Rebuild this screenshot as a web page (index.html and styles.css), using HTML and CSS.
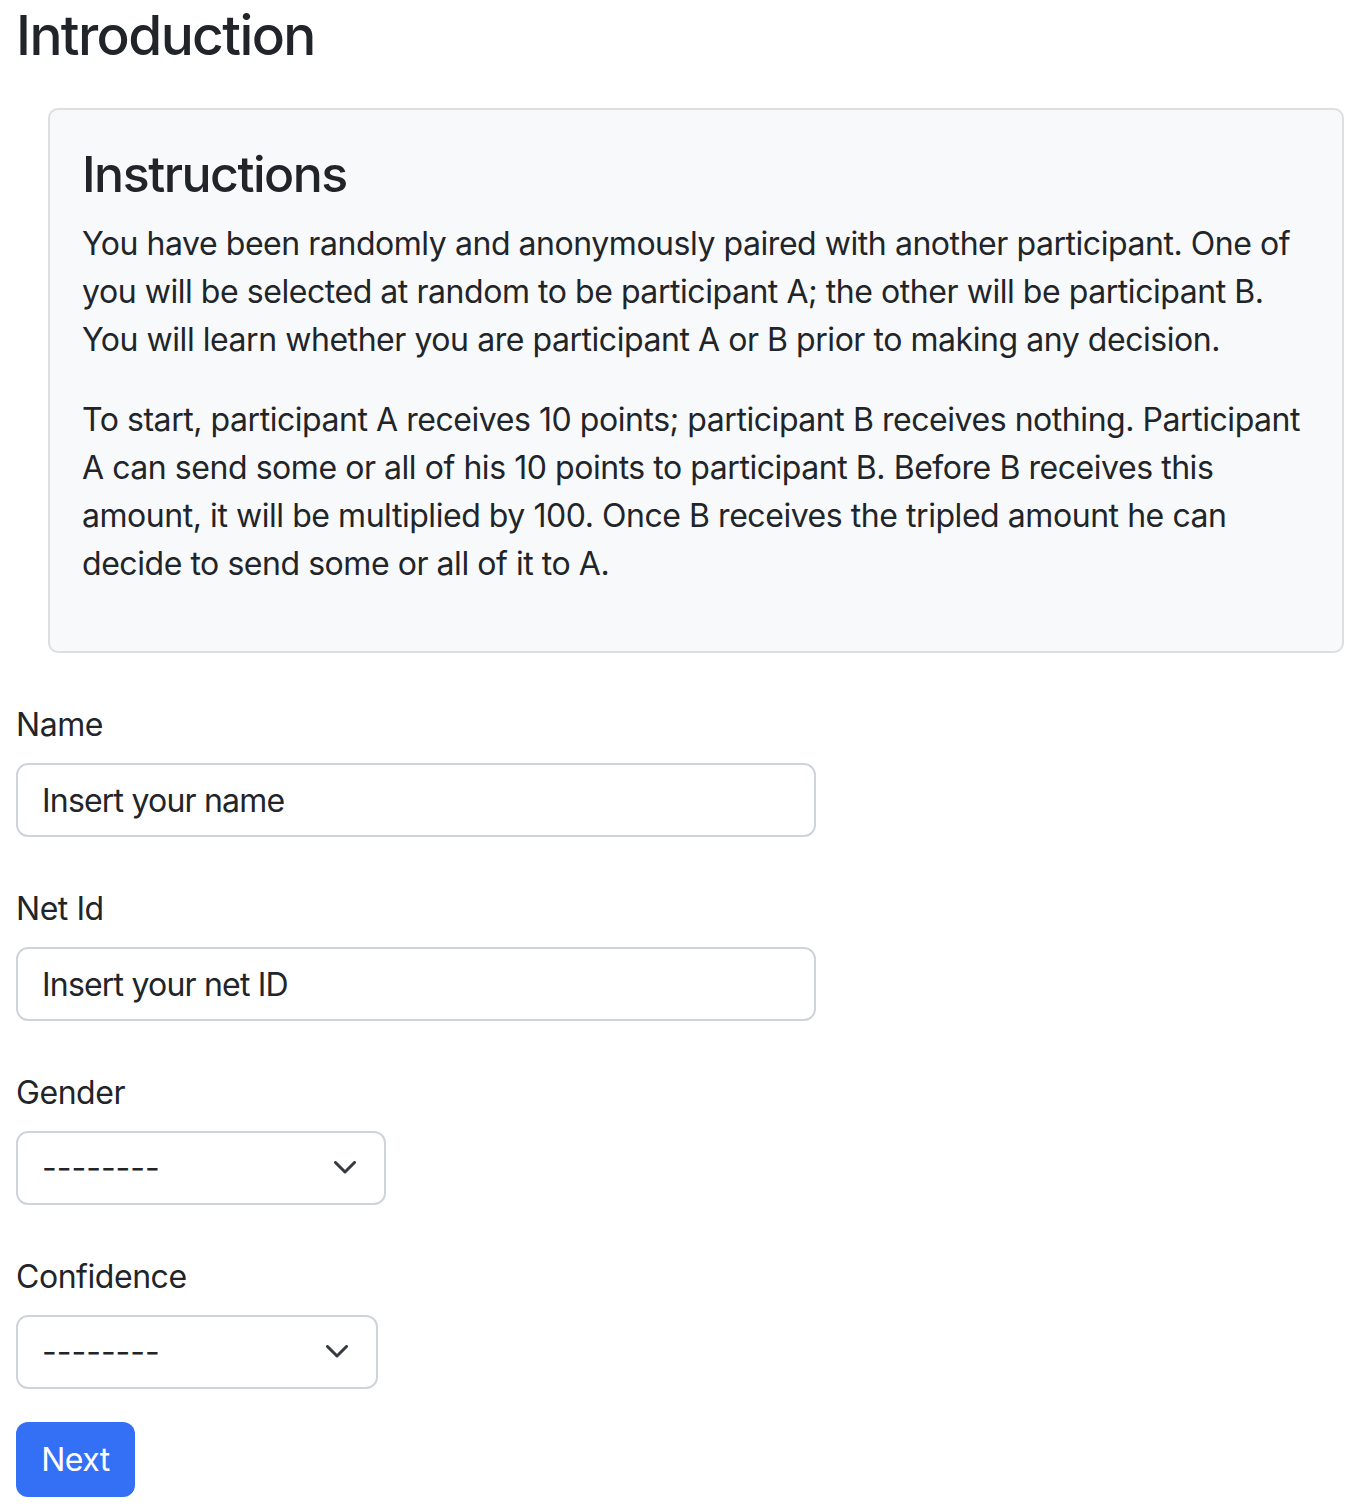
FILE: index.html
```html
<!DOCTYPE html>
<html lang="en">
<head>
<meta charset="utf-8">
<title>Introduction</title>
<link rel="stylesheet" href="styles.css">
</head>
<body>
<div class="page">
  <h1 class="title">Introduction</h1>
  <div class="card">
    <h3 class="card-title">Instructions</h3>
    <p>You have been randomly and anonymously paired with another participant. One of you will be selected at random to be participant A; the other will be participant B. You will learn whether you are participant A or B prior to making any decision.</p>
    <p>To start, participant A receives 10 points; participant B receives nothing. Participant A can send some or all of his 10 points to participant B. Before B receives this amount, it will be multiplied by 100. Once B receives the tripled amount he can decide to send some or all of it to A.</p>
  </div>
  <form class="form">
    <div class="field">
      <label class="label" for="name">Name</label>
      <input class="input" id="name" type="text" value="Insert your name">
    </div>
    <div class="field">
      <label class="label" for="netid">Net Id</label>
      <input class="input" id="netid" type="text" value="Insert your net ID">
    </div>
    <div class="field">
      <label class="label" for="gender">Gender</label>
      <div class="select-wrap select-gender">
        <select class="select" id="gender">
          <option>--------</option>
          <option>Male</option>
          <option>Female</option>
        </select>
        <svg class="chevron" width="22" height="13" viewBox="0 0 22 13"><polyline points="1.5,1.5 11,11 20.5,1.5" fill="none" stroke="#343a40" stroke-width="3" stroke-linecap="round" stroke-linejoin="round"/></svg>
      </div>
    </div>
    <div class="field">
      <label class="label" for="confidence">Confidence</label>
      <div class="select-wrap select-confidence">
        <select class="select" id="confidence">
          <option>--------</option>
          <option>Low</option>
          <option>High</option>
        </select>
        <svg class="chevron" width="22" height="13" viewBox="0 0 22 13"><polyline points="1.5,1.5 11,11 20.5,1.5" fill="none" stroke="#343a40" stroke-width="3" stroke-linecap="round" stroke-linejoin="round"/></svg>
      </div>
    </div>
    <button class="btn" type="button">Next</button>
  </form>
</div>
</body>
</html>
```
FILE: styles.css
```css
* { box-sizing: border-box; }
html, body { margin: 0; padding: 0; background: #fff; }
body {
  font-family: Inter, "Liberation Sans", Arial, sans-serif;
  color: #212529;
  font-size: 32px;
  line-height: 48px;
  letter-spacing: -0.45px;
}
.page {
  padding: 0 16px;
}
.title {
  font-size: 55px;
  font-weight: 500;
  line-height: 66px;
  letter-spacing: -1.6px;
  margin: 0 0 40px 0;
  padding-top: 2px;
}
.card {
  margin-left: 32px;
  background: #f8f9fa;
  border: 2px solid #dcdee0;
  border-radius: 10px;
  padding: 35px 32px 31px 32px;
}
.card-title {
  font-size: 50px;
  font-weight: 500;
  line-height: 58px;
  letter-spacing: -1.5px;
  margin: 0 0 16px 0;
}
.card p {
  margin: 0 0 32px 0;
}
.card p:first-of-type { padding-top: 1px; }
.form {
  margin-top: 48px;
  display: flex;
  flex-direction: column;
  align-items: flex-start;
}
.field {
  display: flex;
  flex-direction: column;
  align-items: flex-start;
  margin-bottom: 48px;
}
.field:nth-last-of-type(1) { margin-bottom: 33px; }
.label {
  display: block;
  line-height: 48px;
  margin-bottom: 14px;
}
.input {
  width: 800px;
  height: 74px;
  border: 2px solid #ced4da;
  border-radius: 12px;
  padding: 0 24px;
  font: inherit;
  letter-spacing: -0.8px;
  color: #212529;
  background: #fff;
  outline: none;
}
.select-wrap {
  position: relative;
}
.select-gender { width: 370px; }
.select-confidence { width: 362px; }
.select {
  -webkit-appearance: none;
  appearance: none;
  width: 100%;
  height: 74px;
  border: 2px solid #ced4da;
  border-radius: 12px;
  padding: 0 72px 0 24px;
  font: inherit;
  letter-spacing: 0;
  color: #212529;
  background: #fff;
  outline: none;
}
.chevron {
  position: absolute;
  right: 30px;
  top: 30px;
  pointer-events: none;
}
.btn {
  width: 119px;
  height: 75px;
  border: none;
  border-radius: 12px;
  background: #3370f6;
  color: #fff;
  font: inherit;
  letter-spacing: -0.5px;
  padding: 0 24px;
  cursor: pointer;
}
```
